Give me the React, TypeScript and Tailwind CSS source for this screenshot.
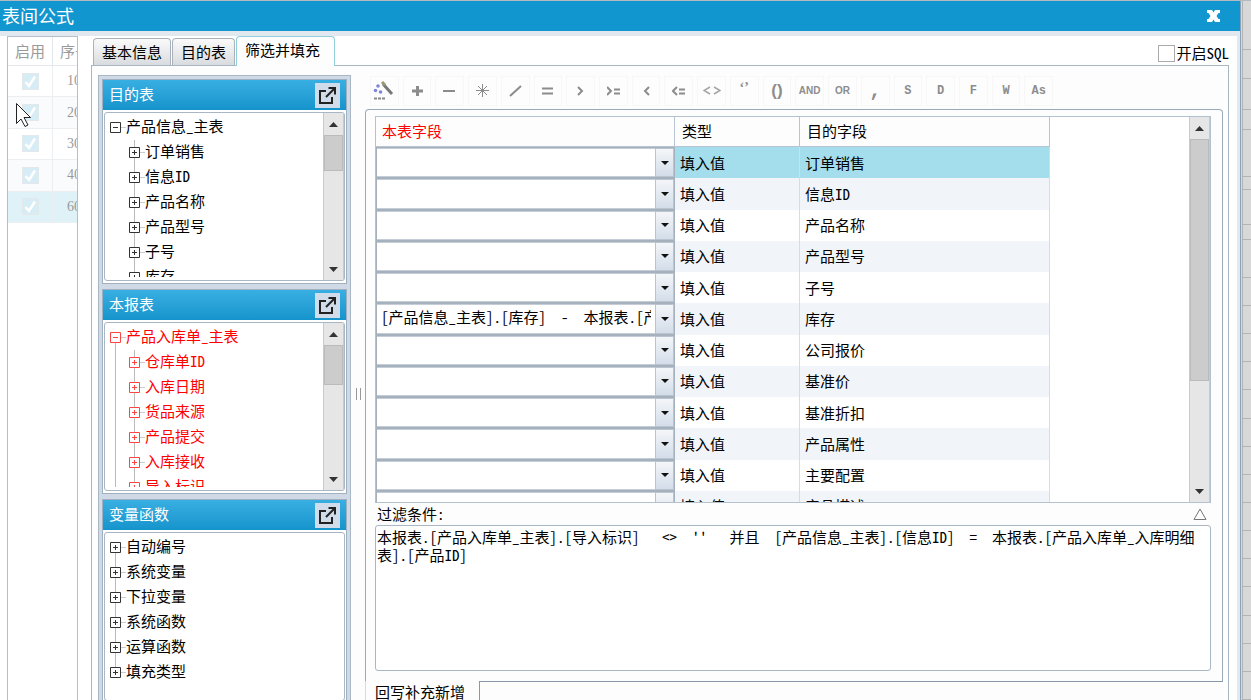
import type { ReactNode } from "react";
import clsx from "clsx";

const operators = ["+", "−", "*", "/", "=", ">", ">=", "<", "<=", "<>", "“”", "()", "AND", "OR", ",", "S", "D", "F", "W", "As"];

const fields = [
    { target: "订单销售", value: "" },
    { target: "信息ID", value: "" },
    { target: "产品名称", value: "" },
    { target: "产品型号", value: "" },
    { target: "子号", value: "" },
    { target: "库存", value: "[产品信息_主表].[库存]  -  本报表.[产品入库单_入库明细表].[数量]" },
    { target: "公司报价", value: "" },
    { target: "基准价", value: "" },
    { target: "基准折扣", value: "" },
    { target: "产品属性", value: "" },
    { target: "主要配置", value: "" },
    { target: "产品描述", value: "" },
];

const filterText =
    "本报表.[产品入库单_主表].[导入标识]   <>  ''   并且  [产品信息_主表].[信息ID]  =  本报表.[产品入库单_入库明细表].[产品ID]";

export default function App() {
    return (
        <div className="flex h-screen w-full overflow-hidden bg-[#b3bac0] pt-px font-['Noto_Sans_CJK_SC','Liberation_Mono',monospace] text-[15px] leading-[18px] text-black [font-feature-settings:'hwid']">
            <main className="flex min-w-0 flex-1 flex-col border-r border-[#8ba3b8] bg-[#e2e8ef]">
                <header className="flex h-[30px] shrink-0 items-center justify-between bg-[#1296d0] pr-5 pb-0.5 pl-0.5 text-white">
                    <h1 className="text-[18px]">表间公式</h1>
                    <button type="button" aria-label="关闭" className="pt-0.5">
                        <svg width="13" height="12" viewBox="0 0 13 12" fill="#fff">
                            <path d="M0 0h5l1.500 2.500L8 0h5v3h-1.500L9.500 6l2 3H13v3H8L6.500 9.500 5 12H0V9h1.500l2-3-2-3H0z" />
                        </svg>
                    </button>
                </header>
                <div className="mt-[5px] mr-[3px] flex min-h-0 flex-1 gap-[13px] bg-white pl-[7px]">
                    <RuleList />
                    <div className="mr-2 flex min-w-0 flex-1 flex-col">
                        <Tabs />
                        <div className="flex min-h-0 flex-1 border-x border-[#a9b6c3] bg-[#fdfdfd] pt-[9px] pr-[5px] pl-1.5">
                            <Sidebar />
                            <div className="flex w-3.5 shrink-0 items-center justify-center gap-[3px] pt-3">
                                <span className="h-3 w-px bg-[#999]" />
                                <span className="h-3 w-px bg-[#999]" />
                            </div>
                            <Editor />
                        </div>
                    </div>
                </div>
            </main>
            <BackgroundGrid />
            <svg className="absolute top-[103px] left-4" width="16" height="25" viewBox="0 0 16 25">
                <path d="M.5 .5v20l4.500-4.500 4 7.500 3-1.500-4-7.500h6.500z" fill="#fff" stroke="#222" />
            </svg>
        </div>
    );
}

const RuleList = () => (
    <div className="w-[71px] shrink-0 overflow-hidden border border-b-0 border-[#b4bfcb] bg-white text-[#9a9a9a]">
        <table className="h-[186px] w-[110px] table-fixed border-separate border-spacing-0">
            <thead>
                <tr className="h-[29px]">
                    <th className="w-[45px] border-r border-b border-[#e3e6ea] p-0 font-normal">启用</th>
                    <th className="border-b border-[#e3e6ea] p-0 pl-[7px] text-left font-normal">序号</th>
                </tr>
            </thead>
            <tbody>
                {[10, 20, 30, 40, 60].map((no, i) => (
                    <tr key={no} className={clsx(i === 4 ? "bg-[#dff2f8]" : i % 2 ? "bg-[#fafbfd]" : "bg-white")}>
                        <td className="border-r border-b border-[#eceff2] p-0">
                            <label className="mx-auto grid size-[17px]">
                                <input
                                    type="checkbox"
                                    defaultChecked
                                    aria-label={`启用 ${no}`}
                                    className="col-start-1 row-start-1 size-[17px] appearance-none border border-[#e4e8ea] bg-[#d7edf6]"
                                />
                                <svg className="pointer-events-none col-start-1 row-start-1" width="17" height="17" viewBox="0 0 17 17">
                                    <path d="M3.500 9l3.500 4 6-9.500" fill="none" stroke="#fff" strokeWidth="2.500" />
                                </svg>
                            </label>
                        </td>
                        <td className="border-b border-[#eceff2] p-0 pl-3.5 font-['Liberation_Serif',serif] text-[14px]">{no}</td>
                    </tr>
                ))}
            </tbody>
        </table>
    </div>
);

const Tabs = () => (
    <nav className="flex h-[30px] shrink-0 items-end border-b border-[#a9b6c3] pl-0.5">
        <Tab>基本信息</Tab>
        <Tab>目的表</Tab>
        <button
            type="button"
            className="-mb-px h-[30px] w-[99px] shrink-0 rounded-t-[4px] border border-b-0 border-[#8fd0dc] bg-[#fdfdfd] pr-1.5 pb-1"
        >
            筛选并填充
        </button>
        <label className="mb-[3px] ml-auto flex items-center">
            <input type="checkbox" className="size-[17px] appearance-none border border-[#aaa] bg-white" />
            <span className="pl-px">开启SQL</span>
        </label>
    </nav>
);

const Tab = ({ children }: { children: ReactNode }) => (
    <button
        type="button"
        className="mr-px h-[27px] shrink-0 rounded-t-[4px] border border-b-0 border-[#a9b2bb] bg-linear-to-b from-[#fafafa] to-[#d9dcdf] px-2"
    >
        {children}
    </button>
);

const Sidebar = () => (
    <aside className="flex w-[253px] shrink-0 flex-col gap-[5px] border border-b-0 border-[#a9b6c3] bg-[#d0dae6] px-[3px] pt-[3px]">
        <TreePanel title="目的表" root="产品信息_主表" items={["订单销售", "信息ID", "产品名称", "产品型号", "子号", "库存"]} scroll />
        <TreePanel
            title="本报表"
            root="产品入库单_主表"
            items={["仓库单ID", "入库日期", "货品来源", "产品提交", "入库接收", "导入标识"]}
            scroll
            red
        />
        <TreePanel title="变量函数" items={["自动编号", "系统变量", "下拉变量", "系统函数", "运算函数", "填充类型"]} />
    </aside>
);

interface TreePanelProps {
    title: string;
    root?: string;
    items: string[];
    scroll?: boolean;
    red?: boolean;
}

const TreePanel = ({ title, root, items, scroll, red }: TreePanelProps) => (
    <section className="flex h-[205px] shrink-0 flex-col border border-[#9fb0c0] bg-white">
        <div className="flex h-[30px] shrink-0 items-center justify-between bg-linear-to-b from-[#38afe2] to-[#1494cc] pr-1.5 pl-1.5 text-white">
            <h2 className="pb-[3px]">{title}</h2>
            <button type="button" aria-label={`打开${title}`} className="flex size-[25px] items-center justify-center bg-[#d0dcea]">
                <svg width="19" height="19" viewBox="0 0 19 19" fill="none" stroke="#222" strokeWidth="2">
                    <path d="M8 5H2v12h12v-6M8 11l8-8M10.500 2H17v6.500" />
                </svg>
            </button>
        </div>
        <div className="mx-px mt-0.5 mb-0.5 flex min-h-0 flex-1 rounded-[3px] border border-[#a9b6c3]">
            <ul className={clsx("min-w-0 flex-1 overflow-hidden pt-0.5 pl-[5px]", red && "text-[#f00]", scroll && "mb-[3px]")}>
                {root && <TreeRow label={root} open red={red} last={!red} first />}
                {items.map((item, i) => (
                    <TreeRow
                        key={item}
                        label={item}
                        red={red}
                        nested={!!root}
                        guide={red}
                        first={!root && i === 0}
                        last={!root && i === items.length - 1}
                    />
                ))}
            </ul>
            {scroll && <ScrollBar thumb={red ? "h-10" : "h-9"} />}
        </div>
    </section>
);

interface TreeRowProps {
    label: string;
    open?: boolean;
    nested?: boolean;
    guide?: boolean;
    red?: boolean;
    first?: boolean;
    last?: boolean;
}

const TreeRow = ({ label, open, nested, guide, red, first, last }: TreeRowProps) => (
    <li className="flex h-[25px] items-center">
        {nested && <span className={clsx("mr-[13px] ml-[5px] h-full w-px", guide && "bg-[#bbb]")} />}
        <span className="flex h-full w-[11px] flex-col items-center">
            <span className={clsx("w-px flex-1", !first && "bg-[#bbb]")} />
            <button type="button" aria-label={label} className="size-[11px]">
                <svg width="11" height="11" viewBox="0 0 11 11" fill="#fff" stroke={red ? "#f44" : "#333"}>
                    <path d={open ? "M.5 .5h10v10H.5zM3 5.500h5" : "M.5 .5h10v10H.5zM3 5.500h5M5.500 3v5"} />
                </svg>
            </button>
            <span className={clsx("w-px flex-1", !last && "bg-[#bbb]")} />
        </span>
        <span className="h-px w-[5px] bg-[#ccc]" />
        <span className="pb-[3px] whitespace-nowrap">{label}</span>
    </li>
);

const ScrollBar = ({ thumb }: { thumb: string }) => (
    <div className="flex w-[21px] shrink-0 flex-col items-center border-x border-[#c3ccd6] bg-[#e6e6e6]">
        <button type="button" aria-label="向上" className="flex h-[22px] w-full shrink-0 items-center justify-center">
            <svg width="9" height="5" viewBox="0 0 9 5">
                <path d="M0 5l4.500-5L9 5z" fill="#333" />
            </svg>
        </button>
        <div className={clsx("w-full shrink-0 border border-[#bbb] bg-[#ccc]", thumb)} />
        <button type="button" aria-label="向下" className="mt-auto flex h-[22px] w-full shrink-0 items-center justify-center">
            <svg width="9" height="5" viewBox="0 0 9 5">
                <path d="M0 0l4.500 5L9 0z" fill="#333" />
            </svg>
        </button>
    </div>
);

const Editor = () => (
    <div className="flex min-w-0 flex-1 flex-col">
        <div className="mt-px ml-[5px] flex h-[30px] w-[683px] shrink-0 gap-1">
            <button type="button" aria-label="公式向导" className="flex flex-1 items-center justify-center border border-[#f7f7f7]">
                <svg width="22" height="20" viewBox="0 0 22 20">
                    <path d="M10 3l9 10" stroke="#777" strokeWidth="3" />
                    <path d="M9 1l3 3" stroke="#997" strokeWidth="3" />
                    <g fill="#7f86d8">
                        <circle cx="5" cy="5" r="1.800" />
                        <circle cx="2.500" cy="9.500" r="1.800" />
                        <circle cx="7.500" cy="11" r="1.800" />
                    </g>
                    <path d="M1 17.500h11" stroke="#888" strokeWidth="2" strokeDasharray="3 1" />
                </svg>
            </button>
            {operators.map((op) => (
                <button
                    key={op}
                    type="button"
                    aria-label={op}
                    className="flex flex-1 items-center justify-center border border-[#f7f7f7] font-['Liberation_Mono',monospace] text-[12px] font-bold text-[#8c8c8c]"
                >
                    <OperatorFace op={op} />
                </button>
            ))}
        </div>
        <div className="mt-[3px] flex h-[572px] shrink-0 flex-col rounded-t-[4px] border border-b-0 border-[#9aaaba] pt-1.5 pr-[11px] pl-[9px]">
            <div className="flex h-[387px] shrink-0 border border-[#b4c1cf] bg-white">
                <div className="min-w-0 flex-1 overflow-hidden">
                    <FieldTable />
                </div>
                <ScrollBar thumb="h-[242px]" />
            </div>
            <div className="flex h-[22px] shrink-0 items-center justify-between pr-1 pl-0.5">
                <label htmlFor="filter">过滤条件:</label>
                <button type="button" aria-label="收起">
                    <svg width="14" height="12" viewBox="0 0 14 12">
                        <path d="M7 1l6 10.500H1z" fill="none" stroke="#777" />
                    </svg>
                </button>
            </div>
            <textarea
                id="filter"
                defaultValue={filterText}
                spellCheck={false}
                className="h-[146px] w-full shrink-0 resize-none overflow-hidden rounded-[3px] border border-[#a9b6c3] bg-white px-px pt-0.5 break-all"
            />
        </div>
        <div className="flex min-h-0 flex-1">
            <button type="button" className="h-[22px] w-[114px] shrink-0 border-l border-[#d4dbe2] pl-[9px] text-left">
                回写补充新增
            </button>
            <div className="flex-1 border-t border-l border-[#8798a8]" />
        </div>
    </div>
);

const OperatorFace = ({ op }: { op: string }) => {
    switch (op) {
        case "+":
            return <Glyph d="M1 7h11M6.500 2v10" w={3} />;
        case "−":
            return <Glyph d="M0 7h12" w={2} />;
        case "*":
            return <Glyph d="M0 6.500h13M6.500 0v13M2 2l9 9M11 2l-9 9" w={1} />;
        case "/":
            return <Glyph d="M1 12L12 2" w={2} />;
        case "=":
            return <Glyph d="M1 4.500h11M1 9.500h11" w={2} />;
        case ">":
            return <Glyph d="M4 3l4 4-4 4" w={2} />;
        case "<":
            return <Glyph d="M9 3L5 7l4 4" w={2} />;
        case ">=":
            return <Glyph d="M0 3l4 4-4 4M7 5.500h6M7 9.500h6" w={2} />;
        case "<=":
            return <Glyph d="M5 3L1 7l4 4M7 5.500h6M7 9.500h6" w={2} />;
        case "<>":
            return (
                <svg width="18" height="14" viewBox="0 0 18 14" fill="none" stroke="#a5a5a5" strokeWidth="1.500">
                    <path d="M7 3L1 6.500 7 10M11 3l6 3.500L11 10" />
                </svg>
            );
        case "“”":
            return <span className="pb-1.5 font-['Liberation_Serif',serif] text-[14px]">‘’</span>;
        case "()":
            return <span className="font-['Liberation_Sans',sans-serif] text-[17px]">()</span>;
        case ",":
            return <span className="text-[20px]">,</span>;
        case "AND":
        case "OR":
            return <span className="font-['Liberation_Sans',sans-serif] text-[10px]">{op}</span>;
        default:
            return <span>{op}</span>;
    }
};

const Glyph = ({ d, w }: { d: string; w: number }) => (
    <svg width="13" height="14" viewBox="0 0 13 14" fill="none" stroke="#8c8c8c" strokeWidth={w}>
        <path d={d} />
    </svg>
);

const FieldTable = () => (
    <table className="h-[405px] w-[674px] table-fixed border-separate border-spacing-0">
        <thead>
            <tr className="h-[30px] text-left">
                <th className="w-[299px] border-r border-b border-[#b9c4d2] bg-[#fdfdfd] p-0 pb-0.5 pl-1.5 font-normal text-[#f00]">本表字段</th>
                <th className="w-[125px] border-r border-b border-[#b9c4d2] bg-[#fdfdfd] p-0 pb-0.5 pl-[7px] font-normal">类型</th>
                <th className="border-r border-b border-[#b9c4d2] bg-[#fdfdfd] p-0 pb-0.5 pl-[7px] font-normal">目的字段</th>
            </tr>
        </thead>
        <tbody>
            {fields.map(({ target, value }, i) => (
                <tr key={target} className={clsx(i === 0 ? "bg-[#a4deec]" : i % 2 ? "bg-[#f1f5f9]" : "bg-white")}>
                    <td className="h-[31px] p-0">
                        <div className="flex h-full border border-[#a5b1bd] bg-white">
                            <input
                                type="text"
                                defaultValue={value}
                                aria-label={target}
                                className="min-w-0 flex-1 border-y border-[#c5ced7] pb-1 pl-1"
                            />
                            <span className="w-1 border-y border-[#c5ced7]" />
                            <button
                                type="button"
                                aria-label={`选择${target}`}
                                className="flex w-[19px] items-center justify-center border border-[#b9c4d0] bg-linear-to-b from-[#f4f6f9] to-[#d3dde9]"
                            >
                                <svg width="8" height="4" viewBox="0 0 8 4">
                                    <path d="M0 0h8L4 4z" fill="#111" />
                                </svg>
                            </button>
                        </div>
                    </td>
                    <td className="border-r border-[#d5dce4] p-0 pl-[5px]">填入值</td>
                    <td className="border-r border-[#d5dce4] p-0 pl-[5px]">{target}</td>
                </tr>
            ))}
        </tbody>
    </table>
);

// the sheet behind the dialog, only its edge is visible
const BackgroundGrid = () => (
    <div className="flex w-[10px] shrink-0 flex-col bg-[#d8d8d8] pl-px">
        {["h-[49px]", "h-[29px]", "h-[31px]", "h-5", "h-[47px]", "h-[13px]", "h-[35px]", "h-[15px]", "h-[38px]", "h-7"].map((h) => (
            <div key={h} className={clsx("shrink-0 border-b border-l border-[#b4b4b4]", h)} />
        ))}
        <div className="flex flex-1 flex-col">
            {Array.from({ length: 14 }, (_, i) => (
                <div key={i} className="flex-1 border-b border-l border-[#b4b4b4]" />
            ))}
        </div>
    </div>
);
